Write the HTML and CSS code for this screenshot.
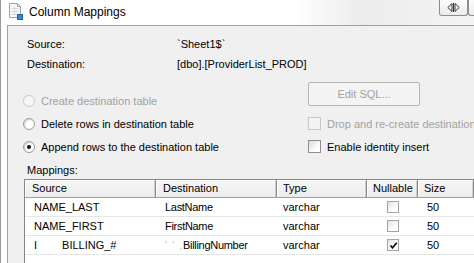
FILE: index.html
```html
<!DOCTYPE html>
<html lang="en">
<head>
    <meta charset="UTF-8">
    <title>Column Mappings</title>
    <link rel="stylesheet" href="styles.css">
</head>
<body>
    <div class="titlebar">
        <svg class="app-icon" width="14" height="17" viewBox="0 0 14 17">
            <path d="M0.5 0.5 H8.5 L11.5 3.5 V14.5 H0.5 Z" fill="#f5f7f9" stroke="#9ba4ae"/>
            <path d="M8.5 0.5 V3.5 H11.5" fill="none" stroke="#9ba4ae"/>
            <path d="M2.5 5.5 H9.5 M2.5 8.5 H9.5 M2.5 11.5 H7.5 M5.5 4.5 V12.5" stroke="#b9c0c8" stroke-dasharray="1 1"/>
            <rect x="8.5" y="11.5" width="5" height="5" fill="#3b86d6" stroke="#1f5fa8"/>
        </svg>
        <span class="title">Column Mappings</span>
        <div class="title-tools">
            <div class="tool-btn">
                <svg width="13" height="9" viewBox="0 0 13 9">
                    <path d="M5 0.5 L0.8 4.5 L5 8.5 Z M8 0.5 L12.2 4.5 L8 8.5 Z" fill="none" stroke="#333"/>
                    <path d="M6.5 0 V9" stroke="#333"/>
                </svg>
            </div>
            <div class="tool-btn next"></div>
        </div>
    </div>

    <div class="panel">
        <div class="info">
            <span>Source:</span><span>`Sheet1$`</span>
            <span>Destination:</span><span>[dbo].[ProviderList_PROD]</span>
        </div>

        <div class="options">
            <div class="radios">
                <div class="opt disabled"><span class="radio"></span>Create destination table</div>
                <div class="opt"><span class="radio"></span>Delete rows in destination table</div>
                <div class="opt"><span class="radio checked"></span>Append rows to the destination table</div>
            </div>
            <div class="extras">
                <div class="btn">Edit SQL...</div>
                <div class="opt disabled"><span class="check"></span>Drop and re-create destination table</div>
                <div class="opt"><span class="check"></span>Enable identity insert</div>
            </div>
        </div>

        <div class="mappings-label">Mappings:</div>

        <div class="grid">
            <div class="grid-head">
                <div class="col c-src">Source</div>
                <div class="col c-dst">Destination</div>
                <div class="col c-type">Type</div>
                <div class="col c-null">Nullable</div>
                <div class="col c-size">Size</div>
            </div>
            <div class="grid-row">
                <div class="col c-src">NAME_LAST</div>
                <div class="col c-dst">LastName</div>
                <div class="col c-type">varchar</div>
                <div class="col c-null"><span class="cell-check"></span></div>
                <div class="col c-size">50</div>
            </div>
            <div class="grid-row">
                <div class="col c-src">NAME_FIRST</div>
                <div class="col c-dst">FirstName</div>
                <div class="col c-type">varchar</div>
                <div class="col c-null"><span class="cell-check"></span></div>
                <div class="col c-size">50</div>
            </div>
            <div class="grid-row">
                <div class="col c-src">I<span class="gap"></span>BILLING_#</div>
                <div class="col c-dst"><span class="smudge">' ' ,</span>BillingNumber</div>
                <div class="col c-type">varchar</div>
                <div class="col c-null">
                    <span class="cell-check">
                        <svg width="9" height="9" viewBox="0 0 9 9"><path d="M1.5 4.5 L3.5 6.8 L7.8 1.8" fill="none" stroke="#000" stroke-width="1.6"/></svg>
                    </span>
                </div>
                <div class="col c-size">50</div>
            </div>
        </div>
    </div>
</body>
</html>
```

FILE: styles.css
```css
body {
    margin: 0;
    width: 473px;
    height: 263px;
    overflow: hidden;
    background: #fff;
    border-left: 1px solid #9a9a9a;
    font-family: 'Liberation Sans', Arial, sans-serif;
    font-size: 11px;
    color: #000;
    display: flex;
    flex-direction: column;
}

.titlebar {
    height: 25px;
    flex: none;
    display: flex;
    align-items: flex-start;
    padding-left: 8px;
    background: linear-gradient(to right, #fff 62%, #ececec 76%, #f4f4f4 100%);
}

.app-icon {
    margin-top: 3px;
}

.title {
    margin-left: 6px;
    margin-top: 5px;
    font-size: 12px;
    white-space: nowrap;
}

.title-tools {
    margin-left: auto;
    display: flex;
}

.tool-btn {
    width: 27px;
    height: 12px;
    border: 1px solid #8c8c8c;
    border-top: none;
    border-radius: 0 0 3px 3px;
    background: linear-gradient(#fbfbfb, #ececec);
    display: flex;
    justify-content: center;
    padding-top: 3px;
}

.tool-btn svg {
    display: block;
}

.tool-btn.next {
    width: 5px;
    border-right: none;
    border-radius: 0 0 0 3px;
}

.panel {
    flex: 1;
    margin-left: 6px;
    border-top: 1px solid #a0a0a0;
    border-left: 1px solid #a0a0a0;
    background: #f0f0f0;
    padding: 8px 0 0 19px;
    display: flex;
    flex-direction: column;
    min-height: 0;
    overflow: hidden;
}

.info {
    display: grid;
    grid-template-columns: 150px auto;
    line-height: 20px;
}

.options {
    display: flex;
    margin-left: -4px;
    white-space: nowrap;
}

.radios {
    flex: none;
    width: 285px;
    padding-top: 15px;
}

.opt {
    height: 23px;
    display: flex;
    align-items: center;
    gap: 6px;
}

.opt.disabled {
    color: #a2a2a2;
}

.radio {
    width: 10px;
    height: 10px;
    border-radius: 50%;
    border: 1px solid #9c9c9c;
    background: radial-gradient(circle at 60% 60%, #fff 40%, #e4e4e4 100%);
    box-shadow: inset 1px 1px 1px rgba(0, 0, 0, 0.12);
    position: relative;
    flex: none;
}

.disabled .radio {
    border-color: #c9c9c9;
    background: #f6f6f6;
    box-shadow: none;
}

.radio.checked::after {
    content: '';
    position: absolute;
    left: 3px;
    top: 3px;
    width: 4px;
    height: 4px;
    border-radius: 50%;
    background: #111;
}

.extras {
    flex: 1;
    min-width: 0;
    overflow: hidden;
    padding-top: 8px;
}

.btn {
    width: 112px;
    height: 24px;
    box-sizing: border-box;
    border: 1px solid #b4b4b4;
    border-radius: 2px;
    background: #f4f4f4;
    color: #a2a2a2;
    display: flex;
    align-items: center;
    justify-content: center;
    margin-bottom: 6px;
}

.check {
    width: 11px;
    height: 11px;
    border: 1px solid #8f8f8f;
    background: linear-gradient(135deg, #dcdcdc, #fff 70%);
    flex: none;
}

.disabled .check {
    border-color: #c6c6c6;
    background: #f4f4f4;
}

.mappings-label {
    margin-top: 5px;
    line-height: 14px;
    margin-bottom: 2px;
}

.grid {
    flex: 1;
    margin-left: -3px;
    border-top: 1px solid #828790;
    border-left: 1px solid #828790;
    background: #fff;
    white-space: nowrap;
    overflow: hidden;
}

.grid-head {
    display: flex;
    height: 17px;
    border-bottom: 1px solid #a0a0a0;
    background: linear-gradient(#f7f7f7, #ececec);
}

.grid-head .col {
    border-right: 1px solid #8a8a8a;
    box-shadow: inset 1px 1px 0 #fff, inset -1px 0 0 #cfcfcf;
    padding-left: 6px;
    line-height: 17px;
}

.grid-row {
    display: flex;
    height: 18px;
    border-bottom: 1px solid #e6e6e6;
    line-height: 18px;
}

.col {
    box-sizing: border-box;
    flex: none;
    overflow: hidden;
}

.c-src { width: 131px; }
.c-dst { width: 121px; }
.c-type { width: 90px; }
.c-null { width: 51px; }
.c-size { width: 56px; }

.grid-head .c-src,
.grid-head .c-dst { padding-left: 7px; }

.grid-row .c-src { padding-left: 9px; }
.grid-row .c-dst { padding-left: 9px; letter-spacing: -0.3px; }
.grid-row .c-type { padding-left: 6px; }
.grid-row .c-size { padding-left: 9px; }

.grid-row .c-null {
    display: flex;
    align-items: center;
    padding-left: 20px;
}

.cell-check {
    width: 10px;
    height: 10px;
    border: 1px solid #a4a4a4;
    background: linear-gradient(135deg, #e2e2e2, #fff 70%);
    display: flex;
    align-items: center;
    justify-content: center;
}

.gap {
    display: inline-block;
    width: 25px;
}

.smudge {
    display: inline-block;
    width: 18px;
    color: #c4c4c4;
    letter-spacing: 1px;
}
```
